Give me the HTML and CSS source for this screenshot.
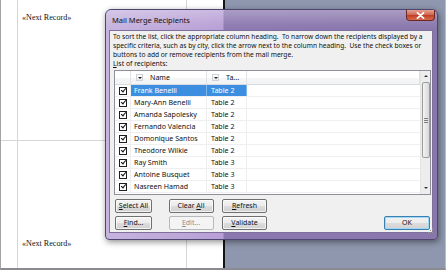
FILE: index.html
```html
<!DOCTYPE html>
<html>
<head>
<meta charset="utf-8">
<link rel="stylesheet" href="styles.css">
</head>
<body>
<div class="screen">
  <div class="doc">
    <div class="cell c1 r1"></div>
    <div class="cell c2 r1 top"><span class="field">«Next Record»</span></div>
    <div class="cell c3 r1"></div>
    <div class="cell c1 r2"></div>
    <div class="cell c2 r2 bottom"><span class="field">«Next Record»</span></div>
    <div class="cell c3 r2"></div>
  </div>
  <div class="edge"></div>
  <div class="desk"></div>

  <div class="dialog">
    <div class="titlebar">
      <span class="title">Mail Merge Recipients</span>
      <span class="close">
        <svg width="9" height="7" viewBox="0 0 9 7"><path d="M1.5 0.8 L7.5 6.2 M7.5 0.8 L1.5 6.2" stroke="#fff" stroke-width="1.8" stroke-linecap="round"/></svg>
      </span>
    </div>
    <div class="content">
      <p class="intro">To sort the list, click the appropriate column heading.&nbsp; To narrow down the recipients displayed by a<br>specific criteria, such as by city, click the arrow next to the column heading.&nbsp; Use the check boxes or<br>buttons to add or remove recipients from the mail merge.</p>
      <div class="label"><u>L</u>ist of recipients:</div>
      <div class="listbox">
        <div class="grid">
          <div class="row head">
            <div class="col chkcol"></div>
            <div class="col namecol"><span class="drop"></span><span class="htext">Name</span></div>
            <div class="col tabcol"><span class="drop"></span><span class="htext">Ta...</span></div>
            <div class="col fill"></div>
          </div>
          <div class="row sel">
            <div class="col chkcol"><span class="chk"></span></div>
            <div class="col namecol">Frank Benelli</div>
            <div class="col tabcol">Table 2</div>
            <div class="col fill"></div>
          </div>
          <div class="row">
            <div class="col chkcol"><span class="chk"></span></div>
            <div class="col namecol">Mary-Ann Benelli</div>
            <div class="col tabcol">Table 2</div>
            <div class="col fill"></div>
          </div>
          <div class="row">
            <div class="col chkcol"><span class="chk"></span></div>
            <div class="col namecol">Amanda Sapolesky</div>
            <div class="col tabcol">Table 2</div>
            <div class="col fill"></div>
          </div>
          <div class="row">
            <div class="col chkcol"><span class="chk"></span></div>
            <div class="col namecol">Fernando Valencia</div>
            <div class="col tabcol">Table 2</div>
            <div class="col fill"></div>
          </div>
          <div class="row">
            <div class="col chkcol"><span class="chk"></span></div>
            <div class="col namecol">Domonique Santos</div>
            <div class="col tabcol">Table 2</div>
            <div class="col fill"></div>
          </div>
          <div class="row">
            <div class="col chkcol"><span class="chk"></span></div>
            <div class="col namecol">Theodore Wilkie</div>
            <div class="col tabcol">Table 2</div>
            <div class="col fill"></div>
          </div>
          <div class="row">
            <div class="col chkcol"><span class="chk"></span></div>
            <div class="col namecol">Ray Smith</div>
            <div class="col tabcol">Table 3</div>
            <div class="col fill"></div>
          </div>
          <div class="row">
            <div class="col chkcol"><span class="chk"></span></div>
            <div class="col namecol">Antoine Busquet</div>
            <div class="col tabcol">Table 3</div>
            <div class="col fill"></div>
          </div>
          <div class="row">
            <div class="col chkcol"><span class="chk"></span></div>
            <div class="col namecol">Nasreen Hamad</div>
            <div class="col tabcol">Table 3</div>
            <div class="col fill"></div>
          </div>
        </div>
        <div class="vscroll">
          <div class="arrow up"></div>
          <div class="thumb"><span class="grip"></span></div>
          <div class="track"></div>
          <div class="arrow down"></div>
        </div>
      </div>
      <div class="footer">
        <div class="btngrid">
          <button class="btn narrow"><u>S</u>elect All</button>
          <button class="btn">Clear <u>A</u>ll</button>
          <button class="btn"><u>R</u>efresh</button>
          <button class="btn narrow"><u>F</u>ind...</button>
          <button class="btn disabled"><u>E</u>dit...</button>
          <button class="btn"><u>V</u>alidate</button>
        </div>
        <button class="btn ok">OK</button>
      </div>
      <svg class="gripper" width="6" height="6" viewBox="0 0 6 6">
        <rect x="4" y="0" width="1" height="1" fill="#9a9a9a"/>
        <rect x="2" y="2" width="1" height="1" fill="#9a9a9a"/>
        <rect x="4" y="2" width="1" height="1" fill="#9a9a9a"/>
        <rect x="0" y="4" width="1" height="1" fill="#9a9a9a"/>
        <rect x="2" y="4" width="1" height="1" fill="#9a9a9a"/>
        <rect x="4" y="4" width="1" height="1" fill="#9a9a9a"/>
      </svg>
    </div>
  </div>
</div>
</body>
</html>
```

FILE: styles.css
```css
* { box-sizing: border-box; }
html, body { margin: 0; padding: 0; }
body { width: 446px; height: 270px; overflow: hidden; background: #fff; }

.screen {
  position: relative;
  width: 446px;
  height: 270px;
  display: flex;
  border-left: 1px solid #a4a4a4;
  border-right: 1px solid #b8bdc9;
  border-bottom: 2px solid #8a8c92;
}

.doc {
  width: 222px;
  height: 268px;
  background: #fff;
  display: grid;
  grid-template-columns: 17px 169px 1fr;
  grid-template-rows: 141px 1fr;
}
.cell { border-color: #d6d6d6; border-style: solid; border-width: 0; }
.c1, .c2 { border-right-width: 1px; }
.r1 { border-bottom-width: 1px; }
.field {
  font-family: "Liberation Serif", "Times New Roman", serif;
  font-size: 8.1px;
  line-height: 10px;
  color: #111;
}
.top { padding: 6px 0 0 4px; }
.bottom { display: flex; align-items: flex-end; padding: 0 0 19px 4px; }

.edge { width: 2px; height: 268px; background: #141414; }
.desk { flex: 1; height: 268px; background: #8e97ae; }

/* Dialog */
.dialog {
  position: absolute;
  left: 104px;
  top: 9px;
  width: 333px;
  height: 231px;
  border: 1px solid #4f4670;
  border-radius: 6px 6px 4px 4px;
  background: linear-gradient(to right, #c6b4de 0, #b89fd6 117px, #8c78b0 118px, #8977ac 100%);
  box-shadow: 1px 2px 6px rgba(0,0,0,0.45);
  display: flex;
  flex-direction: column;
  font-family: "Noto Sans", "Open Sans", sans-serif;
  color: #000;
}
.titlebar {
  position: relative;
  height: 20px;
  display: flex;
  align-items: center;
  padding-left: 6px;
  border-radius: 5px 5px 0 0;
  background: linear-gradient(to bottom, rgba(255,255,255,0.28), rgba(255,255,255,0.05) 70%, rgba(255,255,255,0));
}
.title { font-size: 7.5px; line-height: 10px; color: #101010; }
.close {
  position: absolute;
  right: 2px;
  top: 0;
  width: 29px;
  height: 11px;
  border: 1px solid #6a2a22;
  border-top: none;
  border-radius: 0 0 4px 4px;
  background: linear-gradient(to bottom, #e6a395 0, #d06a55 45%, #c0402a 55%, #d86c4f 100%);
  display: flex;
  align-items: center;
  justify-content: center;
}

.content {
  position: relative;
  height: 203px;
  margin: 0 4px 0 3px;
  border: 1px solid #7e6f9e;
  background: #f0f0f0;
  padding: 0.5px 0 0 3px;
  font-size: 6.65px;
}
.intro {
  margin: 0;
  line-height: 9px;
  white-space: nowrap;
  color: #111;
}
.label { line-height: 9px; color: #111; font-size: 6.85px; }

.listbox {
  margin: 2.5px 0 0 1px;
  width: 317px;
  height: 125px;
  border: 1px solid #8e9099;
  background: #fff;
  display: flex;
}
.grid { flex: 1; display: flex; flex-direction: column; }
.row {
  display: flex;
  height: 12px;
  border-bottom: 1px solid #efefef;
  font-size: 7.1px;
  line-height: 11px;
  color: #111;
}
.row.head {
  height: 14px;
  line-height: 13px;
  border-bottom: 1px solid #d9dbe0;
  background: linear-gradient(to bottom, #ffffff 0, #ffffff 50%, #f5f6f7 51%, #f2f3f4 100%);
}
.col { border-right: 1px solid #eeeeee; overflow: hidden; white-space: nowrap; }
.head .col { border-right: 1px solid #e0e2e5; }
.chkcol { width: 16px; display: flex; align-items: center; justify-content: center; padding-left: 1px; }
.namecol { width: 76px; padding-left: 3px; }
.tabcol { width: 40px; padding-left: 4px; }
.fill { flex: 1; border-right: none; }
.head .namecol { padding-left: 5px; display: flex; align-items: center; }
.head .tabcol { padding-left: 5px; display: flex; align-items: center; }
.htext { margin-left: 7px; }

.drop {
  position: relative;
  width: 7px;
  height: 7px;
  border: 1px solid #d0d2d6;
  background: linear-gradient(#ffffff, #e9eaec);
  flex: none;
}
.drop::after {
  content: "";
  position: absolute;
  left: 1px;
  top: 2px;
  border-left: 2px solid transparent;
  border-right: 2px solid transparent;
  border-top: 2px solid #222;
}

.sel .namecol, .sel .tabcol {
  background: #3c8fe0;
  color: #fff;
  border-right-color: #7fb5ea;
}

.chk {
  position: relative;
  width: 8px;
  height: 8px;
  border: 1px solid #1e1e1e;
  background: #fff;
}
.chk::after {
  content: "";
  position: absolute;
  left: 1.8px;
  top: -0.2px;
  width: 2px;
  height: 4px;
  border: solid #111;
  border-width: 0 1.5px 1.5px 0;
  transform: rotate(40deg);
}

.vscroll {
  width: 10px;
  display: flex;
  flex-direction: column;
  background: #ededed;
  border-left: 1px solid #e4e4e4;
}
.arrow { position: relative; height: 11px; flex: none; }
.arrow::after {
  content: "";
  position: absolute;
  left: 2.5px;
  border-left: 2px solid transparent;
  border-right: 2px solid transparent;
}
.arrow.up::after { top: 4px; border-bottom: 2px solid #333; }
.arrow.down::after { top: 4px; border-top: 2px solid #333; }
.thumb {
  height: 76px;
  margin: 0 0.5px;
  border: 1px solid #9c9c9c;
  border-radius: 2px;
  background: linear-gradient(to right, #f4f4f4, #e3e3e3 60%, #d8d8d8);
  display: flex;
  align-items: center;
  justify-content: center;
}
.grip {
  width: 4px;
  height: 5px;
  background: repeating-linear-gradient(to bottom, #7d7d7d 0, #7d7d7d 1px, transparent 1px, transparent 2px);
}
.track { flex: 1; }

.footer {
  display: flex;
  justify-content: space-between;
  align-items: flex-end;
  margin: 4px 2px 0 2px;
}
.btngrid {
  display: grid;
  grid-template-columns: 45px 45px 45px;
  grid-template-rows: 14px 14px;
  column-gap: 8.5px;
  row-gap: 2.5px;
}
.btn {
  font-family: "Noto Sans", "Open Sans", sans-serif;
  font-size: 7px;
  line-height: 10px;
  color: #111;
  padding: 0;
  margin: 0;
  height: 14px;
  width: 45px;
  border: 1px solid #707070;
  border-radius: 2px;
  background: linear-gradient(to bottom, #f3f3f3 0, #ececec 48%, #dddddd 52%, #d0d0d0 100%);
  box-shadow: inset 0 0 0 1px rgba(255,255,255,0.7);
}
.btn.narrow { width: 37px; }
.btn.disabled {
  color: #8d8d8d;
  border-color: #b6b9bc;
  background: #f4f4f4;
  box-shadow: none;
}
.btn.ok {
  width: 46px;
  height: 14px;
  border-color: #3c7fb1;
  box-shadow: inset 0 0 0 1px #9fd8f4;
  background: linear-gradient(to bottom, #f2f2f2 0, #ebebeb 48%, #dcdcdc 52%, #d2d2d2 100%);
}
.gripper { position: absolute; right: -2px; bottom: -2px; }
```
